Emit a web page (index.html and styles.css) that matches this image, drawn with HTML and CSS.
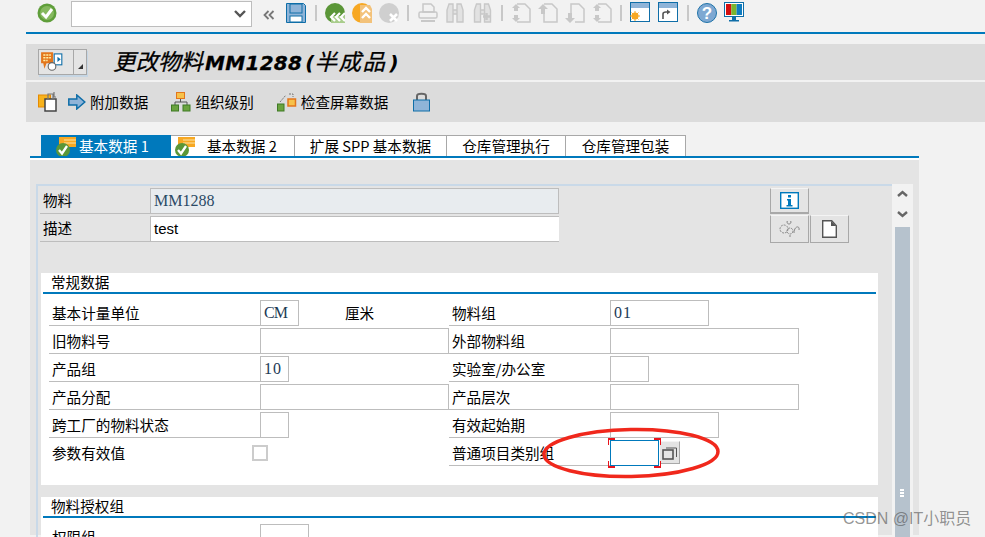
FILE: index.html
```html
<!DOCTYPE html>
<html lang="zh">
<head>
<meta charset="utf-8">
<title>更改物料</title>
<link rel="stylesheet" href="styles.css">
</head>
<body>
<div class="page">
  <div class="systembar">
    <svg class="ic ic-ok" viewBox="0 0 20 20"><circle cx="10" cy="10" r="9.5" fill="#5f9e3a"/><circle cx="10" cy="10" r="7" fill="#86b95f"/><path d="M5 10l4 4 6-8" fill="none" stroke="#fff" stroke-width="3"/></svg>
    <div class="cmd"><svg viewBox="0 0 12 8" class="chev"><path d="M1 1l5 5 5-5" fill="none" stroke="#555" stroke-width="2.4"/></svg></div>
    <svg class="ic ic-back" viewBox="0 0 12 10"><path d="M5.500 1L1.500 5l4 4M10.500 1l-4 4 4 4" fill="none" stroke="#777" stroke-width="1.800"/></svg>
    <svg class="ic ic-save" viewBox="0 0 20 20"><path d="M.5.500h17l2 2v17H.5z" fill="#8fb4d8" stroke="#0f6ea8"/><rect x="4" y="1" width="12" height="9" fill="#8fb4d8" stroke="#0f6ea8"/><rect x="4" y="13" width="12" height="6" fill="#fff" stroke="#0f6ea8"/></svg>
    <i class="sep s1"></i>
    <svg class="ic ic-nav" viewBox="0 0 20 20"><circle cx="10" cy="10" r="10" fill="#5b9638"/><path d="M6 13h14v7H6z" fill="#a9cd8c"/><path d="M10 10l-4 4 4 4M15 10l-4 4 4 4M20 10l-4 4 4 4" fill="none" stroke="#fff" stroke-width="2.200"/></svg>
    <svg class="ic ic-nav" viewBox="0 0 20 20"><circle cx="10" cy="10" r="10" fill="#f7a823"/><path d="M8 2h10l2 4v14H8z" fill="#f3c27a"/><path d="M10 9l4-4 4 4M10 15l4-4 4 4" fill="none" stroke="#fff" stroke-width="2.400"/></svg>
    <svg class="ic ic-nav" viewBox="0 0 20 20"><circle cx="10" cy="10" r="10" fill="#cfcfcf"/><path d="M11 11l7 7M18 11l-7 7" stroke="#fff" stroke-width="2.600"/></svg>
    <i class="sep s2"></i>
    <svg class="ic ic-print" viewBox="0 0 20 20"><path d="M5 1h8l3 3v5H5z" fill="none" stroke="#c8c8c8" stroke-width="1.500"/><rect x="1" y="9" width="18" height="6" rx="1.500" fill="none" stroke="#c8c8c8" stroke-width="1.500"/><rect x="3" y="17" width="14" height="2" fill="#c8c8c8"/></svg>
    <svg class="ic ic-bin" viewBox="0 0 18 20"><path d="M3 1h4v18H1V7zM11 1h4l2 6v12h-6zM7 7h4v4H7z" fill="#e2e2e2" stroke="#c8c8c8" stroke-width="1.400"/></svg>
    <svg class="ic ic-bin2" viewBox="0 0 18 20"><path d="M3 1h4v18H1V7zM11 1h4l2 6v12h-6zM7 7h4v4H7z" fill="#e2e2e2" stroke="#c8c8c8" stroke-width="1.400"/><path d="M13 10v7M9.500 13.500h7" stroke="#c8c8c8" stroke-width="2.500"/></svg>
    <i class="sep s3"></i>
    <svg class="ic ic-page" viewBox="0 0 20 20"><path d="M6 1h8l5 5v13H6" fill="none" stroke="#c8c8c8" stroke-width="1.500"/><path d="M5 1l4 4H7v3H3V5H1zM5 19l4-4H7v-3H3v3H1z" fill="#c8c8c8"/></svg>
    <svg class="ic ic-page" viewBox="0 0 20 20"><path d="M6 1h8l5 5v13H6V8" fill="none" stroke="#c8c8c8" stroke-width="1.500"/><path d="M5 1l5 5H7v5H3V6H0z" fill="#c8c8c8"/></svg>
    <svg class="ic ic-page" viewBox="0 0 20 20"><path d="M6 10V1h8l5 5v13H10" fill="none" stroke="#c8c8c8" stroke-width="1.500"/><path d="M5 20l5-5H7v-5H3v5H0z" fill="#c8c8c8"/></svg>
    <svg class="ic ic-page" viewBox="0 0 20 20"><path d="M6 1h8l5 5v13H6" fill="none" stroke="#c8c8c8" stroke-width="1.500"/><path d="M5 1l4 4H7v3H3V5H1zM5 19l4-4H7v-3H3v3H1z" fill="#c8c8c8"/></svg>
    <i class="sep s4"></i>
    <svg class="ic ic-win" viewBox="0 0 20 20"><rect x=".5" y=".5" width="19" height="19" fill="#fff" stroke="#0f6ea8"/><rect x="1" y="1" width="18" height="5" fill="#8fb4d8"/><circle cx="5" cy="14" r="3.500" fill="#f7a823"/><path d="M5 9v10M0 14h10M1.500 10.500l7 7M8.500 10.500l-7 7" stroke="#f7a823"/></svg>
    <svg class="ic ic-win2" viewBox="0 0 20 20"><rect x=".5" y=".5" width="19" height="19" fill="#fff" stroke="#0f6ea8"/><rect x="1" y="1" width="18" height="5" fill="#8fb4d8"/><path d="M5 17v-5c0-1 1-2 3-2h2" fill="none" stroke="#555" stroke-width="1.600"/><path d="M9 7.500l3.500 2.500L9 12.500z" fill="#555"/></svg>
    <i class="sep s5"></i>
    <svg class="ic ic-help" viewBox="0 0 20 20"><circle cx="10" cy="10" r="9.500" fill="#7ea8d2" stroke="#1f73a8"/><text x="10" y="15.500" class="qm">?</text></svg>
    <svg class="ic ic-mon" viewBox="0 0 20 20"><rect x=".5" y=".5" width="19" height="14" fill="#fff" stroke="#0f6ea8"/><rect x="2" y="2" width="5.300" height="11" fill="#d40f0f"/><rect x="7.300" y="2" width="5.300" height="11" fill="#7ab42e"/><rect x="12.600" y="2" width="5.400" height="11" fill="#0f7cc0"/><path d="M8 15h4v3h3v1.500H5V18h3z" fill="#0f6ea8"/></svg>
  </div>

  <div class="rule"></div>

  <div class="titlebar">
    <div class="menubtn">
      <span class="menubtn-ic">
        <svg viewBox="0 0 22 18"><path d="M1 1h11v10H6l-2 5-1-5H1z" fill="#e3761c"/><path d="M3 3.500h7M3 6h7M3 8.500h4" stroke="#fff0a8" stroke-width="1.300" stroke-dasharray="2 .7"/><rect x="13" y="2.500" width="7" height="10" fill="#fff" stroke="#0f6ea8"/><path d="M16 5l3 2.500-3 2.500z" fill="#0f6ea8"/><circle cx="11" cy="14" r="3.500" fill="#fff" stroke="#666"/></svg>
      </span>
      <span class="menubtn-arrow"><svg viewBox="0 0 5 5"><path d="M5 0v5H0z" fill="#333"/></svg></span>
    </div>
    <h1 class="title"><span class="title-cjk tc1">更改物料</span><span class="title-code">MM1288</span><span class="paren">(</span><span class="title-cjk tc2">半成品</span>)</h1>
  </div>

  <div class="actionbar">
    <svg class="act act-a" viewBox="0 0 20 20"><rect x=".5" y="3" width="12" height="12" fill="#f7b21c" stroke="#e68a00"/><path d="M7 7h11v12H7z" fill="#fff" stroke="#444" stroke-width="1.500"/><path d="M10 7V2h5v5M16 0v5l2 0" fill="none" stroke="#777" stroke-width="1.200"/></svg>
    <svg class="act act-b" viewBox="0 0 18 16"><path d="M.8 5h8V1l8 7-8 7v-4h-8z" fill="#8fb4d8" stroke="#0f6ea8" stroke-width="1.500"/></svg>
    <span class="act-t t1">附加数据</span>
    <svg class="act act-c" viewBox="0 0 20 20"><rect x="5.500" y=".5" width="8" height="6" fill="#f7c24a" stroke="#e3761c"/><path d="M9.500 7v3M4 13v-3h12v3" fill="none" stroke="#555"/><rect x=".5" y="13" width="7" height="6" fill="#6ba33f" stroke="#3f7a25"/><rect x="12" y="13" width="7" height="6" fill="#6ba33f" stroke="#3f7a25"/></svg>
    <span class="act-t t2">组织级别</span>
    <svg class="act act-d" viewBox="0 0 20 20"><rect x=".5" y="12" width="6.500" height="7" fill="#6ba33f" stroke="#3f7a25"/><rect x="11" y="7" width="7.500" height="7" fill="#f7c24a" stroke="#e3761c" stroke-width="1.500"/><path d="M3 10l6-7M12 2h4v3" fill="none" stroke="#777" stroke-dasharray="2 1"/></svg>
    <span class="act-t t3">检查屏幕数据</span>
    <svg class="act act-e" viewBox="0 0 17 20"><path d="M4 9V4c0-3 9-3 9 0v5" fill="none" stroke="#666" stroke-width="2"/><rect x=".5" y="8" width="16" height="11" fill="#8fb4d8" stroke="#0f6ea8"/></svg>
  </div>

  <div class="tabs">
    <div class="tab tab-on tab-w1">
      <svg class="tabic" viewBox="0 0 20 21"><path d="M3 1h17v10H3z" fill="#f7a823"/><path d="M8 4h12M8 7h12" stroke="#fbe3a8" stroke-width="1.200"/><circle cx="7" cy="14" r="7" fill="#5b9638"/><path d="M3 14l3 3.500L11 10" fill="none" stroke="#fff" stroke-width="2.300"/></svg>
      <span>基本数据 1</span>
    </div>
    <div class="tab tab-w2">
      <svg class="tabic" viewBox="0 0 20 21"><path d="M3 1h17v10H3z" fill="#f7a823"/><path d="M8 4h12M8 7h12" stroke="#fbe3a8" stroke-width="1.200"/><circle cx="7" cy="14" r="7" fill="#5b9638"/><path d="M3 14l3 3.500L11 10" fill="none" stroke="#fff" stroke-width="2.300"/></svg>
      <span class="tab-t2">基本数据 2</span>
    </div>
    <div class="tab tab-w3">扩展 SPP 基本数据</div>
    <div class="tab tab-w4">仓库管理执行</div>
    <div class="tab tab-w5">仓库管理包装</div>
  </div>

  <div class="panel">
    <div class="inner">
      <div class="main">
        <div class="head">
          <div class="head-fields">
            <div class="hrow"><label class="hlabel">物料</label><div class="hval hval-ro serif">MM1288</div></div>
            <div class="hrow"><label class="hlabel">描述</label><div class="hval">test</div></div>
          </div>
          <div class="head-btns">
            <div class="hbtn hbtn-top"><svg class="hbi" viewBox="0 0 19 17"><rect x=".7" y=".7" width="17.600" height="15.600" fill="#fff" stroke="#0079bc" stroke-width="1.400"/><path d="M8 3h3v2.500H8zM7 7h4v6h1.500v1.500h-6V13H8V8.500H7z" fill="#0079bc"/></svg></div>
            <div class="hbtn-row">
              <div class="hbtn"><svg class="hbg" viewBox="0 0 21 16"><circle cx="5" cy="8" r="4" fill="none" stroke="#888" stroke-dasharray="2 1"/><circle cx="11" cy="10" r="3" fill="none" stroke="#888" stroke-dasharray="2 1"/><path d="M8 1a2 2 0 1 1 0 .1M11 14v2M15 12c0-7 6-8 5-3" fill="none" stroke="#888"/></svg></div>
              <div class="hbtn hbtn-2"><svg class="hbd" viewBox="0 0 15 18"><path d="M.7.700h9l4.600 5v11.600H.7z" fill="#fff" stroke="#555" stroke-width="1.400"/><path d="M9 1l5 5H9z" fill="#555"/></svg></div>
            </div>
          </div>
        </div>

        <section class="sec sec-1">
          <h2 class="sec-title">常规数据</h2>
          <div class="grid">
            <div class="lab">基本计量单位</div>
            <div class="val"><span class="box w39 serif cm">CM</span><span class="unit">厘米</span></div>
            <div class="lab">物料组</div>
            <div class="val"><span class="box w99 serif wide">01</span></div>

            <div class="lab">旧物料号</div>
            <div class="val"><span class="box w189"></span></div>
            <div class="lab">外部物料组</div>
            <div class="val"><span class="box w189"></span></div>

            <div class="lab">产品组</div>
            <div class="val"><span class="box w29 serif wide">10</span></div>
            <div class="lab">实验室/办公室</div>
            <div class="val"><span class="box w39"></span></div>

            <div class="lab">产品分配</div>
            <div class="val"><span class="box w189"></span></div>
            <div class="lab">产品层次</div>
            <div class="val"><span class="box w189"></span></div>

            <div class="lab">跨工厂的物料状态</div>
            <div class="val"><span class="box w29"></span></div>
            <div class="lab">有效起始期</div>
            <div class="val"><span class="box w109"></span></div>

            <div class="lab lab-plain">参数有效值<span class="check"></span></div>
            <div class="val"></div>
            <div class="lab">普通项目类别组</div>
            <div class="val val-focus">
              <span class="box w49 focus"><i class="cn tl"></i><i class="cn tr"></i><i class="cn bl"></i><i class="cn br"></i></span>
              <span class="f4"><svg viewBox="0 0 16 14"><rect x="1" y="4" width="10" height="9" fill="none" stroke="#555" stroke-width="1.600"/><path d="M4 2h10.500v9" fill="none" stroke="#555"/></svg></span>
            </div>
          </div>
        </section>

        <section class="sec sec-2">
          <h2 class="sec-title">物料授权组</h2>
          <div class="grid">
            <div class="lab">权限组</div>
            <div class="val"><span class="box w49"></span></div>
          </div>
        </section>
      </div>

      <div class="scroll">
        <svg class="sc-arrow sc-up" viewBox="0 0 11 7"><path d="M1 6l4.500-4L10 6" fill="none" stroke="#666" stroke-width="2.400"/></svg>
        <svg class="sc-arrow sc-down" viewBox="0 0 11 7"><path d="M1 1l4.500 4L10 1" fill="none" stroke="#666" stroke-width="2.400"/></svg>
        <div class="thumb"><span class="grip"></span></div>
      </div>
    </div>
  </div>

  <svg class="ellipse" viewBox="0 0 180 52"><ellipse cx="90" cy="26" rx="87" ry="23.500" fill="none" stroke="#f0281c" stroke-width="3.500" transform="rotate(-1 90 26)"/></svg>
  <div class="watermark">CSDN @IT小职员</div>
</div>
</body>
</html>
```
FILE: styles.css
```css
* { box-sizing: border-box; }
html, body { margin: 0; height: 100%; overflow: hidden; }
body { background: #f2f2f2; font-family: "Noto Sans CJK SC", "Liberation Sans", sans-serif; font-size: 14.6px; color: #000; }
.page { position: relative; width: 985px; height: 537px; overflow: hidden; padding-left: 26px; }
.serif { font-family: "Liberation Serif", "Noto Sans CJK SC", serif; font-size: 16px; }

/* system toolbar */
.systembar { display: flex; align-items: flex-start; height: 32px; margin-left: -26px; padding: 3px 0 0 37px; }
.ic { display: block; flex: none; width: 20px; height: 20px; }
.cmd { width: 181px; height: 26px; margin: -2px 0 0 14px; background: #fff; border: 1px solid #bdbdbd; display: flex; align-items: center; justify-content: flex-end; padding-right: 5px; }
.chev { width: 12px; height: 8px; }
.ic-back { width: 12px; height: 10px; margin: 7px 0 0 11px; }
.ic-save { margin-left: 11px; }
.sep { display: block; flex: none; width: 2px; height: 16px; margin-top: 2px; background: #c8c8c8; }
.s1 { margin-left: 9px; }
.ic-nav { margin-left: 7px; }
.s1 + .ic-nav { margin-left: 8px; }
.s2 { margin-left: 8px; }
.ic-print { margin-left: 9px; }
.ic-bin { width: 18px; margin-left: 8px; }
.ic-bin2 { width: 19px; margin-left: 9px; }
.s3 { margin-left: 9px; }
.ic-page { margin-left: 7px; }
.s3 + .ic-page { margin-left: 8px; }
.s4 { margin-left: 8px; }
.ic-win { margin: -1px 0 0 8px; }
.ic-win2 { margin: -1px 0 0 8px; }
.s5 { margin-left: 9px; }
.ic-help { margin-left: 8px; }
.ic-mon { margin: -1px 0 0 7px; }
.rule { height: 2px; background: #0079bc; }

/* title */
.titlebar { display: flex; align-items: center; height: 36px; margin-top: 10px; background: #dcdcdc; }
.menubtn { display: flex; width: 49px; height: 26px; margin-left: 12px; border: 1px solid #a8a8a8; background: #e4e4e4; box-shadow: 1px 2px 0 #c6d6e4; flex: none; }
.menubtn-ic { display: block; width: 35px; padding: 1px 0 0 1px; border-right: 1px solid #a8a8a8; }
.menubtn-ic svg { display: block; width: 24px; height: 20px; }
.menubtn-arrow { flex: 1; position: relative; display: flex; align-items: flex-end; justify-content: flex-end; padding: 0 3px 5px 0; }
.menubtn-arrow svg { width: 5px; height: 5px; }
.title { margin: -2px 0 0 26px; font-size: 20px; line-height: 28px; font-weight: 700; font-style: italic; font-family: "DejaVu Sans", "Noto Sans CJK SC", sans-serif; color: #000; white-space: nowrap; }
.title-cjk { font-family: "Noto Sans CJK SC", sans-serif; font-size: 22.5px; font-weight: 400; -webkit-text-stroke: .3px #000; }
.tc1 { margin-right: 2px; }
.paren { margin-left: 3px; }
.tc2 { margin-right: 3px; letter-spacing: 1.500px; }
.title-code { letter-spacing: .3px; -webkit-text-stroke: .3px #000; }
.actionbar { display: flex; align-items: center; height: 40px; margin-top: 2px; background: #dcdcdc; }
.act { display: block; flex: none; width: 20px; height: 20px; }
.act-t { font-size: 14.6px; line-height: 20px; white-space: nowrap; }
.act-a { margin-left: 12px; }
.act-b { width: 18px; height: 16px; margin-left: 10px; }
.t1 { margin-left: 4px; }
.act-c { margin-left: 23px; }
.t2 { margin-left: 4px; }
.act-d { margin-left: 23px; }
.t3 { margin-left: 4px; }
.act-e { width: 17px; margin-left: 25px; }

/* tabs */
.tabs { display: flex; height: 21px; margin: 13px 0 0 15px; }
.tab { display: flex; align-items: center; justify-content: center; height: 21px; padding-bottom: 1px; background: #fff; border-top: 1px solid #a8a8a8; border-right: 1px solid #a8a8a8; white-space: nowrap; font-size: 14.6px; line-height: 19px; color: #000; position: relative; }
.tab-on { background: #0079bc; color: #fff; border-color: #0079bc; }
.tab-w1 { width: 130px; justify-content: flex-start; padding-left: 38px; }
.tab-w2 { width: 124px; justify-content: flex-start; padding-left: 36px; }
.tab-w3 { width: 152px; }
.tab-w4 { width: 119px; }
.tab-w5 { width: 120px; }
.tabic { position: absolute; left: 15px; top: 0; width: 20px; height: 21px; }
.tab-w2 .tabic { left: 4px; }

/* panel */
.panel { width: 889px; height: 379px; margin-left: 4px; border-top: 2px solid #0079bc; background: #e4e4e4; position: relative; padding: 26px 6px 0 6px; }
.panel::before { content: ""; display: block; position: absolute; left: 0; right: 0; top: 0; height: 2px; background: #fff; }
.inner { display: flex; height: 353px; border-top: 2px solid #c9d9e8; border-left: 2px solid #c9d9e8; }
.main { width: 854px; flex: none; padding: 2px 0 0 2px; }
.head { display: flex; height: 85px; }
.head-fields { width: 730px; display: flex; flex-direction: column; gap: 2px; }
.hrow { display: flex; height: 26px; }
.hlabel { width: 110px; padding-left: 3px; border-bottom: 1px solid #bdbdbd; line-height: 24px; }
.hval { width: 409px; background: #fff; border: 1px solid #bdbdbd; border-width: 1px 0 1px 1px; padding-left: 3px; line-height: 24px; font-size: 15px; font-family: "Liberation Sans", sans-serif; }
.hval-ro { background: #e8ecef; color: #2b4a66; border-right: 1px solid #bdbdbd; font-family: "Liberation Serif", serif; font-size: 16px; }
.head-btns { display: flex; flex-direction: column; gap: 1px; }
.hbtn { width: 39px; height: 28px; border: 1px solid #a8a8a8; border-top: 1px solid #f4f4f4; background: #e4e4e4; display: flex; align-items: center; justify-content: center; }
.hbtn-top { height: 26px; border-bottom-width: 2px; }
.hbtn-row { display: flex; gap: 1px; }
.hbi { width: 19px; height: 17px; }
.hbg { width: 21px; height: 16px; }
.hbd { width: 15px; height: 18px; }

/* sections */
.sec { background: #fff; margin-left: 1px; width: 837px; padding-left: 2px; }
.sec-1 { height: 212px; }
.sec-2 { margin-top: 12px; height: 60px; }
.sec-title { margin: 0; height: 21px; padding-left: 8px; border-bottom: 2px solid #0079bc; width: 833px; font-size: 14.6px; font-weight: 400; line-height: 18px; }
.grid { display: grid; grid-template-columns: 211px 189px 161px 272px; grid-auto-rows: 26px; row-gap: 2px; margin: 6px 0 0 6px; }
.lab { border-bottom: 1px solid #bdbdbd; padding-left: 3px; line-height: 25px; font-size: 14.6px; white-space: nowrap; }
.lab-plain { border-bottom: 0; position: relative; }
.val { display: flex; align-items: flex-start; }
.box { display: block; height: 26px; background: #fff; border: 1px solid #bdbdbd; padding-left: 3px; line-height: 24px; color: #1c3a55; flex: none; }
.cm { font-size: 16px; letter-spacing: -1px; }
.wide { letter-spacing: 1px; }
.w29 { width: 29px; }
.w39 { width: 39px; }
.w49 { width: 49px; }
.w99 { width: 99px; }
.w109 { width: 109px; }
.w189 { width: 189px; }
.unit { margin-left: 46px; line-height: 25px; color: #000; }
.check { position: absolute; left: 203px; top: 5px; width: 16px; height: 16px; border: 2px solid #ccc; background: #fff; }
.focus { position: relative; border-color: #0079bc; overflow: visible; }
.cn { position: absolute; width: 7px; height: 7px; border: 0 solid #e8141c; }
.tl { left: -3px; top: -3px; border-width: 2px 0 0 1px; }
.tr { right: -3px; top: -3px; border-width: 2px 1px 0 0; }
.bl { left: -3px; bottom: -3px; border-width: 0 0 2px 1px; }
.br { right: -3px; bottom: -3px; border-width: 0 1px 2px 0; }
.f4 { display: flex; align-items: center; justify-content: center; width: 20px; height: 23px; margin: 1px 0 0 1px; background: #e4e4e4; border: 1px solid #a8a8a8; border-top-color: #f4f4f4; border-left: 0; flex: none; }
.f4 svg { width: 16px; height: 14px; }

/* scrollbar */
.scroll { position: relative; flex: none; width: 21px; height: 351px; background: #f2f2f2; margin-top: -2px; }
.sc-arrow { position: absolute; left: 5px; width: 11px; height: 7px; }
.sc-up { top: 6px; }
.sc-down { top: 27px; }
.thumb { position: absolute; left: 3px; top: 43px; width: 15px; height: 310px; background: #b6c2cd; }
.grip { position: absolute; left: 5px; top: 262px; width: 4px; height: 8px; background: repeating-linear-gradient(#fff 0 2px, #b6c2cd 2px 3px); }

/* overlays */
.ellipse { position: absolute; left: 541px; top: 427px; width: 180px; height: 52px; }
.watermark { position: absolute; left: 843px; top: 509px; font-family: "Liberation Sans", "Noto Sans CJK SC", sans-serif; font-size: 16px; line-height: 20px; color: rgba(90, 90, 90, .65); white-space: nowrap; }
.qm { font-family: "Liberation Sans", sans-serif; font-size: 17px; font-weight: 700; fill: #fff; text-anchor: middle; }
```
